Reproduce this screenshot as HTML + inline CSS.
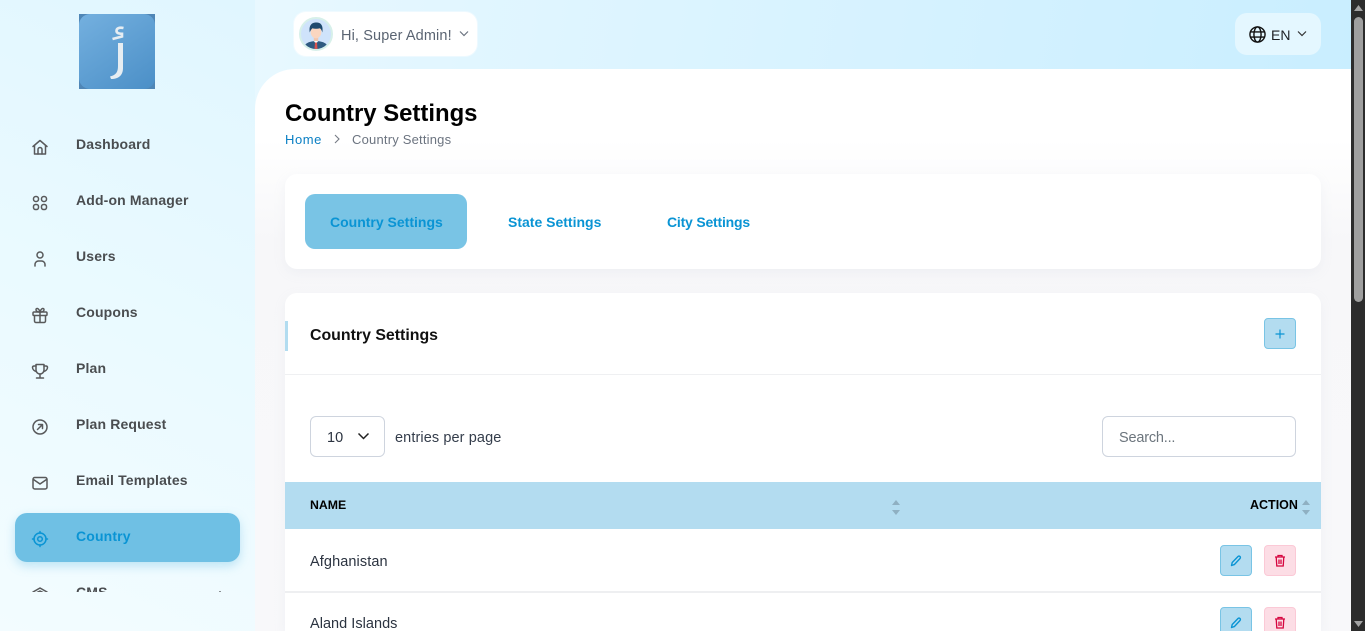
<!DOCTYPE html>
<html lang="en"><head><meta charset="utf-8"><title>Country Settings</title>
<style>
*{box-sizing:border-box}
html,body{margin:0;padding:0;width:1365px;height:631px;overflow:hidden}
body{font-family:"Liberation Sans",sans-serif;color:#293240;position:relative;background:linear-gradient(100deg,#f0fbff 0%,#e2f6ff 30%,#c6edff 100%)}
.a{position:absolute;white-space:nowrap}
.nav{left:76px;font-size:14px;font-weight:700;color:#4a4d50;line-height:20px;letter-spacing:.15px}
.ic{position:absolute;left:31px;width:18px;height:18px;fill:none;stroke:#58595b;stroke-width:1.5;stroke-linecap:round;stroke-linejoin:round}
svg{display:block}
</style></head><body>

<!-- sidebar -->
<div class="a" style="left:0;top:0;width:255px;height:631px;background:linear-gradient(25deg,#f3fcff 0%,#eafaff 50%,#e0f6ff 100%)"></div>
<div class="a" style="left:79px;top:14px;width:76px;height:75px;background:#4f86b6"></div>
<div class="a" style="left:79px;top:14px;width:76px;height:75px;border-radius:11px;background:linear-gradient(145deg,#74b0df,#4b8fc7)"></div>
<svg class="a" style="left:79px;top:14px" width="76" height="75" viewBox="0 0 76 75"><path d="M39 29H44V54C44 61 40 65 32 65L31 62.500C37 61 39 58 39 52Z" fill="#e6edf2"/><path d="M44.500 14C40 13 37.500 14.500 37.500 16.800 37.500 19 40 19.800 43 19.800V22.500L33.500 25" fill="none" stroke="#e6edf2" stroke-width="2.600"/></svg>

<div class="a nav" style="top:134px">Dashboard</div>
<svg class="ic" style="top:138px" viewBox="0 0 18 18"><path d="M2 8.500 9 2.500l7 6"/><path d="M3.500 7.500V16h11V7.500"/><path d="M7 16v-4.500a2 2 0 0 1 4 0V16"/></svg>
<div class="a nav" style="top:190px">Add-on Manager</div>
<svg class="ic" style="top:194px" viewBox="0 0 18 18"><rect x="2.500" y="2.500" width="5" height="5" rx="2.300"/><rect x="10.500" y="2.500" width="5" height="5" rx="2.300"/><rect x="2.500" y="10.500" width="5" height="5" rx="2"/><rect x="10.500" y="10.500" width="5" height="5" rx="2"/></svg>
<div class="a nav" style="top:246px">Users</div>
<svg class="ic" style="top:250px" viewBox="0 0 18 18"><circle cx="9" cy="5" r="3"/><path d="M4 16v-1.500A3.500 3.500 0 0 1 7.500 11h3a3.500 3.500 0 0 1 3.500 3.500V16"/></svg>
<div class="a nav" style="top:302px">Coupons</div>
<svg class="ic" style="top:306px" viewBox="0 0 18 18"><rect x="2" y="6" width="14" height="3.500" rx="1"/><path d="M3.500 9.500V15a1.500 1.500 0 0 0 1.500 1.500h8a1.500 1.500 0 0 0 1.500-1.500V9.500M9 6v10.500"/><path d="M9 6C7 6 5 5.500 5 3.700 5 2 7.500 1.500 9 6c1.500-4.500 4-4 4-2.300C13 5.500 11 6 9 6z"/></svg>
<div class="a nav" style="top:358px">Plan</div>
<svg class="ic" style="top:362px" viewBox="0 0 18 18"><path d="M5 2.500h8V8a4 4 0 0 1-8 0z"/><path d="M5 4H3c-1 0-1.500.7-1.500 1.500C1.500 7.500 3.500 9 5.300 9.500M13 4h2c1 0 1.500.7 1.500 1.500 0 2-2 3.500-3.800 4"/><path d="M9 12v3.500M5.500 16h7"/></svg>
<div class="a nav" style="top:414px">Plan Request</div>
<svg class="ic" style="top:418px" viewBox="0 0 18 18"><circle cx="9" cy="9" r="7"/><path d="M6.500 11.500l5-5M7.500 6.500h4v4"/></svg>
<div class="a nav" style="top:470px">Email Templates</div>
<svg class="ic" style="top:474px" viewBox="0 0 18 18"><rect x="2" y="3.500" width="14" height="11.500" rx="1.800"/><path d="M2.500 5.500 9 10l6.500-4.500"/></svg>

<div class="a" style="left:15px;top:513px;width:225px;height:49px;border-radius:12px;background:#6fc0e4;box-shadow:0 4px 10px rgba(111,192,228,.4)"></div>
<div class="a nav" style="top:526px;color:#0a94d4">Country</div>
<svg class="ic" style="top:530px;stroke:#0a94d4" viewBox="0 0 18 18"><circle cx="9" cy="9" r="6"/><circle cx="9" cy="9" r="2.300"/><path d="M9 1.500V3M9 15v1.500M1.500 9H3M15 9h1.500"/></svg>

<div class="a" style="left:0;top:580px;width:255px;height:12px;overflow:hidden">
  <div class="a nav" style="top:2px">CMS</div>
  <svg class="ic" style="top:5px" viewBox="0 0 18 18"><path d="M2 7l7-4 7 4M5 8l4-2 4 2"/></svg>
  <div class="a" style="left:219px;top:11px;width:2px;height:1px;background:#8b9094"></div>
</div>

<!-- header -->
<div class="a" style="left:294px;top:12px;width:183px;height:44px;border-radius:12px;background:#fff;box-shadow:0 0 0 1px rgba(255,255,255,.4)"></div>
<div class="a" style="left:299px;top:17px;width:34px;height:34px;border-radius:50%;border:2px solid #d7f0ea;background:#cfe3fb;overflow:hidden">
<svg width="30" height="30" viewBox="0 0 30 30"><path d="M3 30c0-6 5-7.500 12-8 7 .5 12 2 12 8z" fill="#2f5a80"/><path d="M12.500 21.500h5L15 25z" fill="#fff"/><path d="M14 23.500h2l.5 6.500h-3z" fill="#d9534f"/><rect x="12.800" y="17" width="4.400" height="5" fill="#f2c6ae"/><ellipse cx="15" cy="13" rx="5.300" ry="6.300" fill="#fbd6c0"/><path d="M8.800 13.500C7.500 6 11 3.500 15.300 3.500s7.200 2.500 6 10c-.5-2-1-3.500-2.500-4.300-2 .7-5.500.7-7.300 0-1 .8-2.200 2.300-2.700 4.300z" fill="#1f4a6e"/></svg></div>
<div class="a" style="left:341px;top:26px;font-size:14.5px;line-height:20px;color:#5a6472;letter-spacing:.12px">Hi, Super Admin!</div>
<svg class="a" style="left:459px;top:30px" width="10" height="8" viewBox="0 0 10 8"><path d="M1 1.500l4 4 4-4" fill="none" stroke="#6c7480" stroke-width="1.200"/></svg>

<div class="a" style="left:1235px;top:13px;width:86px;height:42px;border-radius:12px;background:#e4f7ff"></div>
<svg class="a" style="left:1249px;top:26px" width="17" height="17" viewBox="0 0 18 18" fill="none" stroke="#111" stroke-width="1.500"><circle cx="9" cy="9" r="8"/><ellipse cx="9" cy="9" rx="3.800" ry="8"/><path d="M1.500 6.300h15M1.500 11.700h15"/></svg>
<div class="a" style="left:1271px;top:25px;font-size:14px;line-height:20px;color:#1c1f24">EN</div>
<svg class="a" style="left:1297px;top:30px" width="10" height="8" viewBox="0 0 10 8"><path d="M1 1.500l4 4 4-4" fill="none" stroke="#333" stroke-width="1.200"/></svg>

<!-- content -->
<div class="a" style="left:255px;top:69px;width:1096px;height:562px;background:linear-gradient(180deg,#fff 0,#fff 70px,#f7f7f9 170px,#f8f8fa 100%);border-top-left-radius:40px"></div>
<div class="a" style="left:285px;top:97px;font-size:23.900px;font-weight:700;line-height:33px;color:#000">Country Settings</div>
<div class="a" style="left:285px;top:131px;font-size:13px;line-height:18px;color:#0a7fc4;letter-spacing:.55px">Home</div>
<svg class="a" style="left:333px;top:134px" width="8" height="10" viewBox="0 0 8 10"><path d="M2 1l4 4-4 4" fill="none" stroke="#767c85" stroke-width="1.100"/></svg>
<div class="a" style="left:352px;top:131px;font-size:13px;line-height:18px;color:#6c7480;letter-spacing:.2px">Country Settings</div>

<div class="a" style="left:285px;top:174px;width:1036px;height:95px;border-radius:12px;background:#fff;box-shadow:0 4px 12px rgba(170,175,195,.1)"></div>
<div class="a" style="left:305px;top:194px;width:162px;height:55px;border-radius:10px;background:#79c4e5"></div>
<div class="a" style="left:330px;top:212px;font-size:14px;font-weight:700;line-height:20px;color:#0a94d4">Country Settings</div>
<div class="a" style="left:508px;top:212px;font-size:14px;font-weight:700;line-height:20px;color:#0a94d4">State Settings</div>
<div class="a" style="left:667px;top:212px;font-size:14px;font-weight:700;line-height:20px;color:#0a94d4;letter-spacing:-.2px">City Settings</div>

<div class="a" style="left:285px;top:293px;width:1036px;height:338px;border-radius:12px 12px 0 0;background:#fff;box-shadow:0 4px 12px rgba(170,175,195,.1)"></div>
<div class="a" style="left:285px;top:321px;width:3px;height:30px;background:#b2dcf0"></div>
<div class="a" style="left:310px;top:325px;font-size:15.900px;font-weight:700;line-height:22px;color:#111">Country Settings</div>
<div class="a" style="left:1264px;top:318px;width:32px;height:31px;border-radius:4px;background:#b3dcf0;border:1px solid #79c4e5"></div>
<svg class="a" style="left:1274px;top:328px" width="12" height="12" viewBox="0 0 12 12"><path d="M6 1.500v9M1.500 6h9" stroke="#0a94d4" stroke-width="1.200"/></svg>
<div class="a" style="left:285px;top:374px;width:1036px;height:1px;background:#eff0f2"></div>

<div class="a" style="left:310px;top:416px;width:75px;height:41px;border-radius:6px;border:1px solid #ced4de;background:#fff"></div>
<div class="a" style="left:327px;top:428px;font-size:14.500px;line-height:20px;color:#2b3340">10</div>
<svg class="a" style="left:357px;top:432px" width="13" height="9" viewBox="0 0 13 9"><path d="M1.500 1.500l5 5 5-5" fill="none" stroke="#222" stroke-width="1.500"/></svg>
<div class="a" style="left:395px;top:428px;font-size:14.500px;line-height:20px;color:#343d4b;letter-spacing:.1px">entries per page</div>
<div class="a" style="left:1102px;top:416px;width:194px;height:41px;border-radius:6px;border:1px solid #ced4de;background:#fff"></div>
<div class="a" style="left:1119px;top:428px;font-size:14.500px;line-height:20px;color:#6c757d;letter-spacing:-.2px">Search...</div>

<div class="a" style="left:285px;top:482px;width:1036px;height:47px;background:#b3dcf0"></div>
<div class="a" style="left:310px;top:497px;font-size:12.300px;font-weight:700;line-height:17px;color:#000">NAME</div>
<div class="a" style="left:1250px;top:497px;font-size:12.500px;font-weight:700;line-height:17px;color:#000">ACTION</div>
<svg class="a" style="left:891px;top:499px" width="10" height="17" viewBox="0 0 10 17"><path d="M5 1l4 5H1zM1 11h8l-4 5z" fill="#8fb0c2"/></svg>
<svg class="a" style="left:1301px;top:499px" width="10" height="17" viewBox="0 0 10 17"><path d="M5 1l4 5H1zM1 11h8l-4 5z" fill="#8fb0c2"/></svg>

<div class="a" style="left:310px;top:552px;font-size:14.500px;line-height:20px;color:#2b3340;letter-spacing:.1px">Afghanistan</div>
<div class="a" style="left:285px;top:591px;width:1036px;height:2px;background:#eeeff1"></div>
<div class="a" style="left:310px;top:614px;font-size:14.500px;line-height:20px;color:#2b3340;letter-spacing:.03px">Aland Islands</div>

<div class="a" style="left:1220px;top:545px;width:32px;height:31px;border-radius:4px;background:#b3dcf0;border:1px solid #79c4e5"></div>
<svg class="a" style="left:1230px;top:554px" width="12" height="13" viewBox="0 0 12 13"><path d="M1.500 11.500l.7-3L8 2.500a1.400 1.400 0 0 1 2 2L4.300 10.600z" fill="none" stroke="#0a94d4" stroke-width="1.400" stroke-linejoin="round"/></svg>
<div class="a" style="left:1264px;top:545px;width:32px;height:31px;border-radius:4px;background:#fcdde5;border:1px solid #fbc9d6"></div>
<svg class="a" style="left:1274px;top:554px" width="12" height="13" viewBox="0 0 12 13"><path d="M1 3h10M4 3V1.500h4V3M2.200 3l.6 9h6.400l.6-9M5 5.500V10M7 5.500V10" fill="none" stroke="#d6053f" stroke-width="1.300"/></svg>

<div class="a" style="left:1220px;top:607px;width:32px;height:31px;border-radius:4px;background:#b3dcf0;border:1px solid #79c4e5"></div>
<svg class="a" style="left:1230px;top:616px" width="12" height="13" viewBox="0 0 12 13"><path d="M1.500 11.500l.7-3L8 2.500a1.400 1.400 0 0 1 2 2L4.300 10.600z" fill="none" stroke="#0a94d4" stroke-width="1.400" stroke-linejoin="round"/></svg>
<div class="a" style="left:1264px;top:607px;width:32px;height:31px;border-radius:4px;background:#fcdde5;border:1px solid #fbc9d6"></div>
<svg class="a" style="left:1274px;top:616px" width="12" height="13" viewBox="0 0 12 13"><path d="M1 3h10M4 3V1.500h4V3M2.200 3l.6 9h6.400l.6-9M5 5.500V10M7 5.500V10" fill="none" stroke="#d6053f" stroke-width="1.300"/></svg>

<!-- scrollbar -->
<div class="a" style="left:1351px;top:0;width:14px;height:631px;background:#2c2c2c"></div>
<div class="a" style="left:1354px;top:17px;width:9px;height:285px;border-radius:5px;background:#9f9f9f"></div>
<svg class="a" style="left:1353px;top:4px" width="11" height="8" viewBox="0 0 11 8"><path d="M5.500 1 10 7H1z" fill="#a3a3a3"/></svg>
<svg class="a" style="left:1353px;top:620px" width="11" height="8" viewBox="0 0 11 8"><path d="M1 1h9L5.500 7z" fill="#a3a3a3"/></svg>
</body></html>
